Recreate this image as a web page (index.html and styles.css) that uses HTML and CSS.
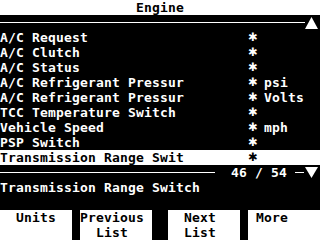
FILE: index.html
```html
<!DOCTYPE html>
<html lang="en">

<head>
    <meta charset="UTF-8">
    <title>Engine</title>
    <link rel="stylesheet" href="styles.css">
</head>

<body>
    <div class="skaerm">
        <div class="titel">Engine</div>

        <div class="streg-linje">
            <span class="streg"></span>
            <svg class="pil" width="13" height="12" viewBox="0 0 13 12"><polygon points="6.5,0 13,12 0,12" fill="#fff"/></svg>
        </div>

        <ul class="liste">
            <li><span class="navn">A/C Request</span><span class="vaerdi">✱</span><span class="enhed"></span></li>
            <li><span class="navn">A/C Clutch</span><span class="vaerdi">✱</span><span class="enhed"></span></li>
            <li><span class="navn">A/C Status</span><span class="vaerdi">✱</span><span class="enhed"></span></li>
            <li><span class="navn">A/C Refrigerant Pressur</span><span class="vaerdi">✱</span><span class="enhed">psi</span></li>
            <li><span class="navn">A/C Refrigerant Pressur</span><span class="vaerdi">✱</span><span class="enhed">Volts</span></li>
            <li><span class="navn">TCC Temperature Switch</span><span class="vaerdi">✱</span><span class="enhed"></span></li>
            <li><span class="navn">Vehicle Speed</span><span class="vaerdi">✱</span><span class="enhed">mph</span></li>
            <li><span class="navn">PSP Switch</span><span class="vaerdi">✱</span><span class="enhed"></span></li>
            <li class="valgt"><span class="navn">Transmission Range Swit</span><span class="vaerdi">✱</span><span class="enhed"></span></li>
        </ul>

        <div class="streg-linje">
            <span class="streg"></span>
            <span class="taeller">46 / 54</span>
            <span class="streg kort"></span>
            <svg class="pil" width="13" height="11" viewBox="0 0 13 11"><polygon points="0,0 13,0 6.5,11" fill="#fff"/></svg>
        </div>

        <div class="beskrivelse">Transmission Range Switch</div>

        <div class="knapper">
            <div class="knap">  Units</div>
            <div class="knap">Previous
  List</div>
            <div class="knap">  Next
  List</div>
            <div class="knap"> More</div>
        </div>
    </div>
</body></html>
```

FILE: styles.css
```css
body {
    margin: 0;
    background-color: #000;
    color: #fff;
    font-family: "DejaVu Sans Mono", monospace;
    font-weight: bold;
    font-size: 13px;
    letter-spacing: .17px;
}

.skaerm {
    width: 320px;
    height: 240px;
    overflow: hidden;
}

.titel {
    height: 15px;
    line-height: 15px;
    background-color: #fff;
    color: #000;
    text-align: center;
}

.streg-linje {
    height: 15px;
    display: flex;
    align-items: center;
}

.streg {
    flex: 1;
    height: 1px;
    background-color: #fff;
}

.streg.kort {
    flex: 0 0 9px;
    margin-right: 1px;
}

.pil {
    margin-right: 2px;
}

.taeller {
    line-height: 15px;
    margin: 0 8px 0 16px;
}

.liste {
    list-style: none;
    margin: 0;
    padding: 0;
}

.liste li {
    display: grid;
    grid-template-columns: 248px 16px 1fr;
    height: 15px;
    line-height: 15px;
    white-space: pre;
}

.liste li.valgt {
    background-color: #fff;
    color: #000;
}

.vaerdi {
    font-family: "DejaVu Sans", sans-serif;
    font-weight: normal;
    font-size: 11.5px;
    line-height: 15px;
    letter-spacing: 0;
}

.beskrivelse {
    height: 15px;
    line-height: 15px;
}

.knapper {
    margin-top: 15px;
    display: flex;
    gap: 8px;
}

.knap {
    width: 72px;
    height: 30px;
    line-height: 15px;
    background-color: #fff;
    color: #000;
    white-space: pre;
}

.knap:nth-child(3) {
    margin-left: 8px;
}
```
